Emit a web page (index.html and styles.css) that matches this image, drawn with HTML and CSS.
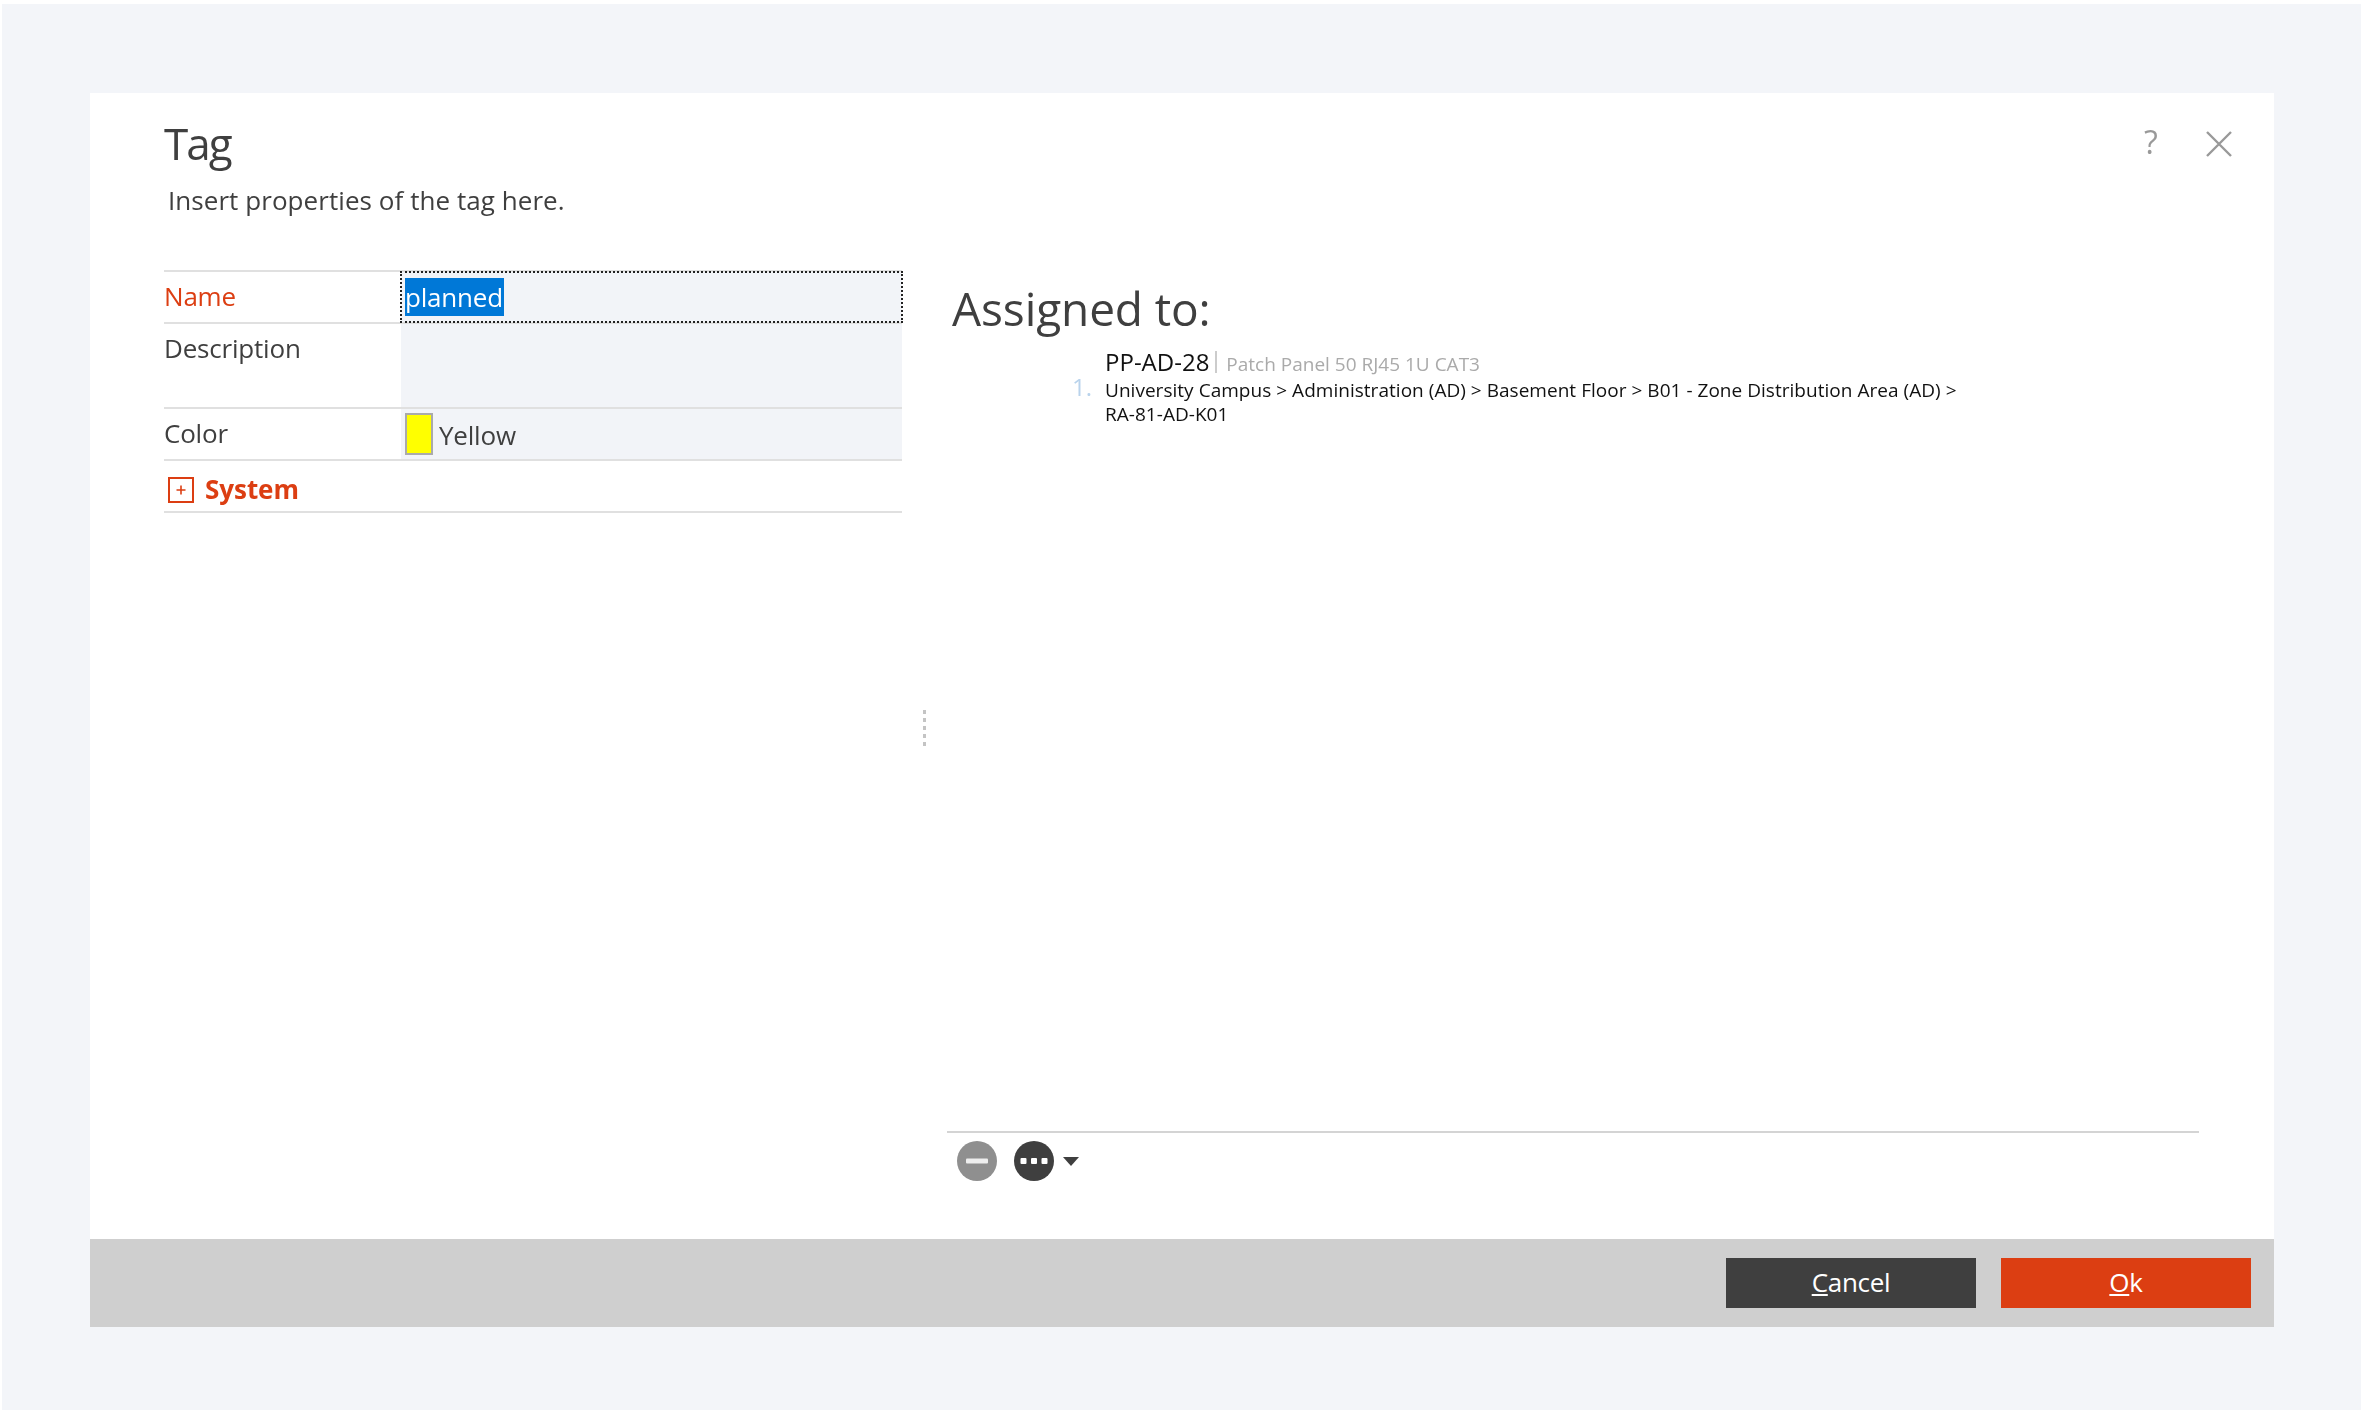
FILE: index.html
```html
<!DOCTYPE html>
<html lang="en">
<head>
<meta charset="utf-8">
<title>Tag</title>
<link rel="stylesheet" href="styles.css">
</head>
<body>
<div class="backdrop">
  <div class="dialog">
    <div class="main">
      <header class="head">
        <div class="head-text">
          <h1 class="title">Tag</h1>
          <p class="subtitle">Insert properties of the tag here.</p>
        </div>
        <div class="head-actions">
          <span class="help">?</span>
          <svg class="close" viewBox="0 0 26 26" width="26" height="26"><path d="M1 1 L25 25 M25 1 L1 25" fill="none" stroke="#999" stroke-width="2.4"/></svg>
        </div>
      </header>
      <div class="panes">
        <section class="form">
          <div class="row row-name">
            <div class="label label-req">Name</div>
            <div class="value value-focus"><span class="selected">planned</span></div>
          </div>
          <div class="row row-desc">
            <div class="label">Description</div>
            <div class="value"></div>
          </div>
          <div class="row row-color">
            <div class="label">Color</div>
            <div class="value value-color"><span class="swatch"></span><span class="color-name">Yellow</span></div>
          </div>
          <div class="row row-group">
            <svg class="plus" viewBox="0 0 26 26" width="26" height="26"><rect x="1" y="1" width="24" height="24" fill="none" stroke="#dc3e12" stroke-width="2"/><path d="M8.5 13 H17.5 M13 8.5 V17.5" fill="none" stroke="#dc3e12" stroke-width="1.6"/></svg>
            <span class="group-name">System</span>
          </div>
        </section>
        <div class="splitter"></div>
        <section class="assigned">
          <h2 class="assigned-title">Assigned to:</h2>
          <div class="list">
            <div class="item">
              <span class="num">1.</span>
              <div class="item-body">
                <div class="item-head"><span class="item-name">PP-AD-28</span><span class="sep"></span><span class="item-type">Patch Panel 50 RJ45 1U CAT3</span></div>
                <div class="item-path">University Campus &gt; Administration (AD) &gt; Basement Floor &gt; B01 - Zone Distribution Area (AD) &gt; <span class="nowrap">RA-81-AD-K01</span></div>
              </div>
            </div>
          </div>
          <div class="toolbar">
            <svg class="tool" viewBox="0 0 40 40" width="40" height="40"><circle cx="20" cy="20" r="20" fill="#8f8f8f"/><rect x="9" y="17.5" width="22" height="5" rx="1" fill="#eee"/></svg>
            <svg class="tool" viewBox="0 0 40 40" width="40" height="40"><circle cx="20" cy="20" r="20" fill="#3f3f3f"/><rect x="6.5" y="17" width="6" height="6" rx="1" fill="#fff"/><rect x="17" y="17" width="6" height="6" rx="1" fill="#fff"/><rect x="27.5" y="17" width="6" height="6" rx="1" fill="#fff"/></svg>
            <svg class="caret" viewBox="0 0 16 9" width="16" height="9"><path d="M0 0 H16 L8 9 Z" fill="#3f3f3f"/></svg>
          </div>
        </section>
      </div>
    </div>
    <footer class="foot">
      <button class="btn btn-dark" type="button"><u>C</u>ancel</button>
      <button class="btn btn-accent" type="button"><u>O</u>k</button>
    </footer>
  </div>
</div>
</body>
</html>
```
FILE: styles.css
```css
* { box-sizing: border-box; }
html, body { margin: 0; background: #fff; }
body { font-family: "Open Sans", "Liberation Sans", sans-serif; color: #3f3f3f; }
.backdrop { margin: 4px 0 0 2px; height: 1406px; background: #f3f5f9; padding: 89px 87px 0 88px; }
.dialog { height: 1234px; background: #fff; display: flex; flex-direction: column; }
.main { flex: 1; display: flex; flex-direction: column; min-height: 0; filter: blur(0.45px); }
.head { display: flex; justify-content: space-between; padding: 22px 42px 0 74px; height: 177px; }
.title { margin: 0; font-size: 44px; line-height: 56px; font-weight: 400; letter-spacing: -2px; }
.subtitle { margin: 12px 0 0 4px; font-size: 26px; line-height: 34px; letter-spacing: 0.06px; }
.head-actions { display: flex; gap: 43px; align-items: flex-start; padding-top: 16px; }
.help { font-size: 32px; line-height: 32px; color: #999; width: 19px; margin-top: -5px; }
.panes { flex: 1; display: flex; min-height: 0; }
.form { width: 738px; margin-left: 74px; align-self: flex-start; border-top: 2px solid #e0e0e0; }
.row { display: flex; border-bottom: 2px solid #e0e0e0; }
.row-name { height: 52px; }
.row-desc { height: 85px; }
.row-color { height: 52px; }
.row-group { height: 52px; align-items: center; padding: 5px 0 0 4px; gap: 11px; }
.plus { margin-top: 2px; }
.label { width: 237px; font-size: 26px; line-height: 34px; padding-top: 7px; letter-spacing: -0.2px; }
.label-req { color: #dc3e12; }
.value { flex: 1; background: #f2f4f8; font-size: 26px; }
.value-focus { outline: 2px dotted #222; outline-offset: -1px; padding: 6px 4px; }
.selected { display: inline-block; height: 38px; line-height: 38px; background: #0078d7; color: #fff; letter-spacing: -0.2px; padding-right: 1px; }
.value-color { display: flex; align-items: center; padding-left: 4px; gap: 6px; }
.swatch { width: 28px; height: 42px; background: #ff0; border: 2px solid #aaa; }
.color-name { letter-spacing: -0.2px; line-height: 34px; margin-top: 1px; }
.group-name { font-size: 26px; font-weight: 700; color: #dc3e12; letter-spacing: -0.05px; }
.splitter { width: 3px; height: 40px; margin: 440px 21px 0 21px; background: repeating-linear-gradient(#c4c4c4 0 4px, #fff 4px 8px); }
.assigned { flex: 1; margin-right: 75px; display: flex; flex-direction: column; }
.assigned-title { margin: 0 0 0 5px; padding-top: 8px; height: 75px; font-size: 46px; line-height: 60px; font-weight: 400; letter-spacing: -0.1px; }
.list { flex: 1; }
.item { display: flex; align-items: center; padding-left: 125px; }
.num { width: 33px; font-size: 24px; color: #b9d3ec; margin-top: 2px; }
.item-body { width: 880px; }
.item-head { display: flex; align-items: baseline; height: 33px; }
.item-name { font-size: 24px; color: #111; }
.sep { width: 2px; height: 22px; background: #ccc; margin: 0 9px 0 6px; align-self: center; }
.item-type { font-size: 19px; color: #aaa; }
.item-path { font-size: 19px; line-height: 24px; color: #111; letter-spacing: 0.03px; }
.nowrap { white-space: nowrap; }
.toolbar { height: 108px; border-top: 2px solid #d4d4d4; display: flex; align-items: flex-start; padding: 8px 0 0 10px; }
.tool + .tool { margin-left: 17px; }
.caret { margin: 16px 0 0 9px; }
.foot { height: 88px; background: #cfcfcf; display: flex; justify-content: flex-end; align-items: center; gap: 25px; padding-right: 23px; }
.btn { width: 250px; height: 50px; border: 0; color: #fff; font-family: inherit; font-size: 26px; letter-spacing: -0.3px; padding: 0 0 2px; }
.btn-dark { background: #3f3f3f; }
.btn-accent { background: #dc3e12; }
```
